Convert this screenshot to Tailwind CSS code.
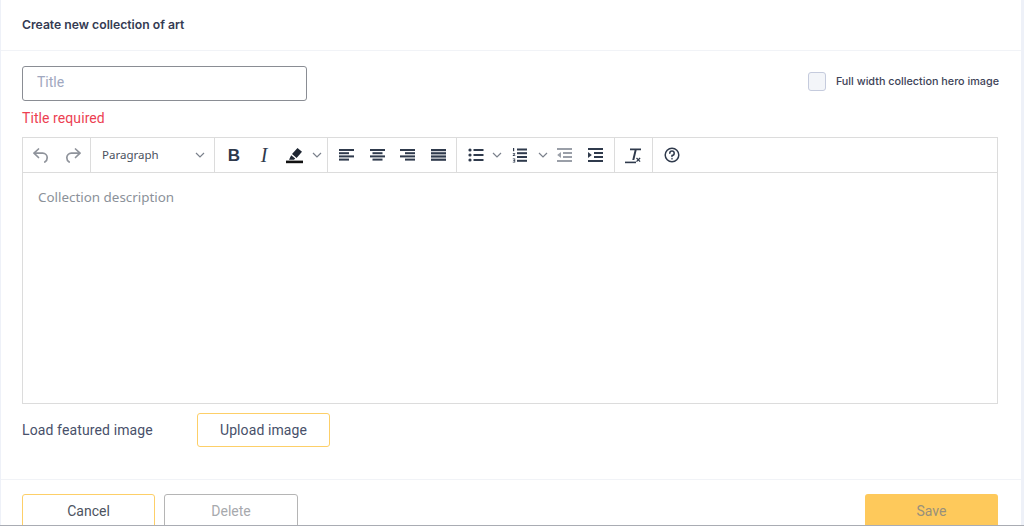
<!DOCTYPE html>
<html lang="en">
<head>
<meta charset="utf-8">
<script src="https://cdn.jsdelivr.net/npm/@tailwindcss/browser@4"></script>
<title>Create new collection of art</title>
</head>
<body class="m-0 bg-[#eef1f8]">
<div class="h-[526px] w-[1024px] overflow-hidden relative font-['Roboto',sans-serif]">
  <div class="ml-px mr-[3px] h-[525px] bg-white flex flex-col overflow-hidden">
    <div class="h-[51px] shrink-0 border-b border-[#f1f3f7] pl-[21px] flex items-center">
      <h1 class="font-['Inter',sans-serif] text-[12.2px] font-semibold text-[#343b52] m-0">Create new collection of art</h1>
    </div>
    <div class="h-[429px] shrink-0 border-b border-[#f1f3f7] pl-[21px] pr-[23px] flex flex-col">
      <div class="flex items-center justify-between mt-[15px]">
        <div class="w-[285px] h-[35px] border border-[#8a8d94] rounded-[3px] flex items-center pl-[14px] pb-[2px] text-[14px] text-[#a0a8c0]">Title</div>
        <label class="flex items-center gap-[10px] -mr-px mb-[4px] font-['Inter',sans-serif] text-[10.8px] font-medium text-[#3d4357]">
          <span class="w-[18px] h-[19px] rounded-[3px] border border-[#c5cbdd] bg-[#f3f5f9]"></span>
          <span class="pt-[2px]">Full width collection hero image</span>
        </label>
      </div>
      <p class="m-0 mt-[9px] h-[17px] leading-[17px] text-[14px] tracking-[0.08px] text-[#ec3f52]">Title required</p>
      <div class="mt-[10px] h-[267px] w-[976px] border border-[#dcdcdc] flex flex-col">
        <div class="h-[35px] shrink-0 border-b border-[#dcdcdc] flex text-[#2f3a4c]">
          <div class="w-[68px] border-r border-[#dcdcdc] flex items-center pl-[9px] gap-[14px] text-[#8f939b]">
            <svg class="w-[18px] h-[18px]" viewBox="0 0 18 18" fill="none" stroke="currentColor" stroke-width="1.7" stroke-linecap="round" stroke-linejoin="round"><path d="M6.5 3 2 7.2l4.5 4.3"/><path d="M2.5 7.2h8.2a4.5 4.5 0 0 1 4.5 4.5c0 1.8-.9 3.4-2.4 4.3"/></svg>
            <svg class="w-[18px] h-[18px]" viewBox="0 0 18 18" fill="none" stroke="currentColor" stroke-width="1.7" stroke-linecap="round" stroke-linejoin="round"><path d="M11.5 3 16 7.2l-4.5 4.3"/><path d="M15.5 7.2H7.3a4.5 4.5 0 0 0-4.5 4.5c0 1.8.9 3.4 2.4 4.3"/></svg>
          </div>
          <div class="w-[124px] border-r border-[#dcdcdc] flex items-center justify-between pl-[11px] pr-[9px] font-['Noto_Sans',sans-serif] text-[11.5px] text-[#4a5160]">
            <span>Paragraph</span>
            <svg class="w-[10px] h-[6px] text-[#7b818c]" viewBox="0 0 10 6" fill="none" stroke="currentColor" stroke-width="1.2"><path d="M1 1l4 4 4-4"/></svg>
          </div>
          <div class="w-[113px] border-r border-[#dcdcdc] flex items-center pl-[10px]">
            <span class="w-[18px] text-center font-['Liberation_Sans',sans-serif] font-bold text-[17px] leading-none">B</span>
            <span class="ml-[14px] w-[14px] text-center font-['Liberation_Serif',serif] italic text-[20px] leading-none">I</span>
            <svg class="ml-[15px] w-[18px] h-[18px]" viewBox="0 0 18 18"><path fill="#1f2733" d="M11.5 2l4.5 3.8-5.4 6.2-4.6-3.9zM5.2 9.2l4 3.4-1.2 1.1H3z"/><rect x="0" y="14.6" width="17" height="2.6" fill="#111"/></svg>
            <svg class="ml-[8px] w-[10px] h-[6px] text-[#7b818c]" viewBox="0 0 10 6" fill="none" stroke="currentColor" stroke-width="1.2"><path d="M1 1l4 4 4-4"/></svg>
          </div>
          <div class="w-[129px] border-r border-[#dcdcdc] flex items-center pl-[10px] gap-[13px]">
            <svg class="w-[18px] h-[14px]" viewBox="0 0 18 14" fill="currentColor"><rect x="1" y="1" width="15" height="2"/><rect x="1" y="4.2" width="10" height="2"/><rect x="1" y="7.4" width="15" height="2"/><rect x="1" y="10.6" width="10" height="2"/></svg>
            <svg class="w-[18px] h-[14px]" viewBox="0 0 18 14" fill="currentColor"><rect x="1" y="1" width="15" height="2"/><rect x="3.5" y="4.2" width="10" height="2"/><rect x="1" y="7.4" width="15" height="2"/><rect x="3.5" y="10.6" width="10" height="2"/></svg>
            <svg class="w-[18px] h-[14px]" viewBox="0 0 18 14" fill="currentColor"><rect x="0" y="1" width="15" height="2"/><rect x="5" y="4.2" width="10" height="2"/><rect x="0" y="7.4" width="15" height="2"/><rect x="5" y="10.6" width="10" height="2"/></svg>
            <svg class="w-[18px] h-[14px]" viewBox="0 0 18 14" fill="currentColor"><rect x="0" y="1" width="15" height="2.2"/><rect x="0" y="4.2" width="15" height="2.2"/><rect x="0" y="7.4" width="15" height="2.2"/><rect x="0" y="10.6" width="15" height="2.2"/></svg>
          </div>
          <div class="w-[158px] border-r border-[#dcdcdc] flex items-center pl-[10px]">
            <svg class="w-[18px] h-[14px]" viewBox="0 0 18 14" fill="currentColor"><circle cx="3" cy="2" r="1.6"/><circle cx="3" cy="7" r="1.6"/><circle cx="3" cy="12" r="1.6"/><rect x="6.5" y="1" width="10" height="2"/><rect x="6.5" y="6" width="10" height="2"/><rect x="6.5" y="11" width="10" height="2"/></svg>
            <svg class="ml-[7px] w-[10px] h-[6px] text-[#7b818c]" viewBox="0 0 10 6" fill="none" stroke="currentColor" stroke-width="1.2"><path d="M1 1l4 4 4-4"/></svg>
            <svg class="ml-[10px] w-[16px] h-[16px]" viewBox="0 0 16 16" fill="currentColor"><path d="M1 1h1.2v3.2H1zM.8 6.2h2.4v.9L1.9 8.3h1.4v.8H.8v-.8l1.4-1.3H.8zM.8 11.5h2.4v4H.8v-.8h1.6v-.8H1.2v-.7h1.2v-.9H.8z"/><rect x="5" y="1.5" width="10" height="2"/><rect x="5" y="5.2" width="10" height="2"/><rect x="5" y="9" width="10" height="2"/><rect x="5" y="12.8" width="10" height="2"/></svg>
            <svg class="ml-[10px] w-[10px] h-[6px] text-[#7b818c]" viewBox="0 0 10 6" fill="none" stroke="currentColor" stroke-width="1.2"><path d="M1 1l4 4 4-4"/></svg>
            <svg class="ml-[8px] w-[16px] h-[14px] text-[#9a9fa8]" viewBox="0 0 16 14" fill="currentColor"><rect x="1" y="0" width="15" height="2"/><rect x="7" y="4" width="9" height="2"/><rect x="7" y="8" width="9" height="2"/><rect x="1" y="12" width="15" height="2"/><path d="M5 4v6L1.2 7z"/></svg>
            <svg class="ml-[15px] w-[16px] h-[14px]" viewBox="0 0 16 14" fill="currentColor"><rect x="1" y="0" width="15" height="2"/><rect x="7" y="4" width="9" height="2"/><rect x="7" y="8" width="9" height="2"/><rect x="1" y="12" width="15" height="2"/><path d="M1 4v6l3.8-3z"/></svg>
          </div>
          <div class="w-[38px] border-r border-[#dcdcdc] flex items-center pl-[10px]">
            <svg class="w-[18px] h-[18px]" viewBox="0 0 18 18"><path fill="currentColor" d="M5 2.5h11v1.8h-4.4L9.3 14H7.3l2.3-9.7H5z"/><rect x="0" y="15.6" width="11" height="1.6" fill="currentColor"/><path d="M11.5 12l3.6 3.6m0-3.6-3.6 3.6" stroke="currentColor" stroke-width="1.3"/></svg>
          </div>
          <div class="flex items-center pl-[10px]">
            <svg class="w-[18px] h-[18px]" viewBox="0 0 18 18" fill="none" stroke="currentColor" stroke-width="1.5"><circle cx="9" cy="9" r="6.8"/><path d="M6.8 7.2A2.2 2.2 0 1 1 9 9.4v1.2" stroke-linecap="round"/><circle cx="9" cy="12.8" r=".5" fill="currentColor" stroke-width=".6"/></svg>
          </div>
        </div>
        <div class="flex-1 pl-[15px] pt-[14px] font-['Noto_Sans',sans-serif] text-[13.4px] leading-[20px] text-[#8b9199]">Collection description</div>
      </div>
      <div class="mt-[9px] flex items-center">
        <span class="w-[175px] text-[14px] tracking-[0.12px] text-[#48506a]">Load featured image</span>
        <button class="w-[133px] h-[34px] border border-[#fdcf68] rounded-[3px] bg-white text-[14px] tracking-[0.1px] text-[#48506a]">Upload image</button>
      </div>
    </div>
    <div class="flex justify-between pl-[21px] pr-[23px] pt-[14px]">
      <div class="flex gap-[9px]">
        <button class="w-[133px] h-[36px] pb-[2px] border border-[#fdcf68] rounded-[3px] bg-white text-[14px] text-[#4d5360]">Cancel</button>
        <button class="w-[134px] h-[36px] pb-[2px] border border-[#b5b5b5] rounded-[3px] bg-white text-[14px] text-[#a7a9ad]">Delete</button>
      </div>
      <button class="w-[133px] h-[36px] pb-[2px] rounded-[3px] bg-[#fec95b] text-[14px] text-[#98907c]">Save</button>
    </div>
  </div>
  <div class="absolute left-0 right-0 bottom-0 h-px bg-[#a9acb3]"></div>
</div>
</body>
</html>
